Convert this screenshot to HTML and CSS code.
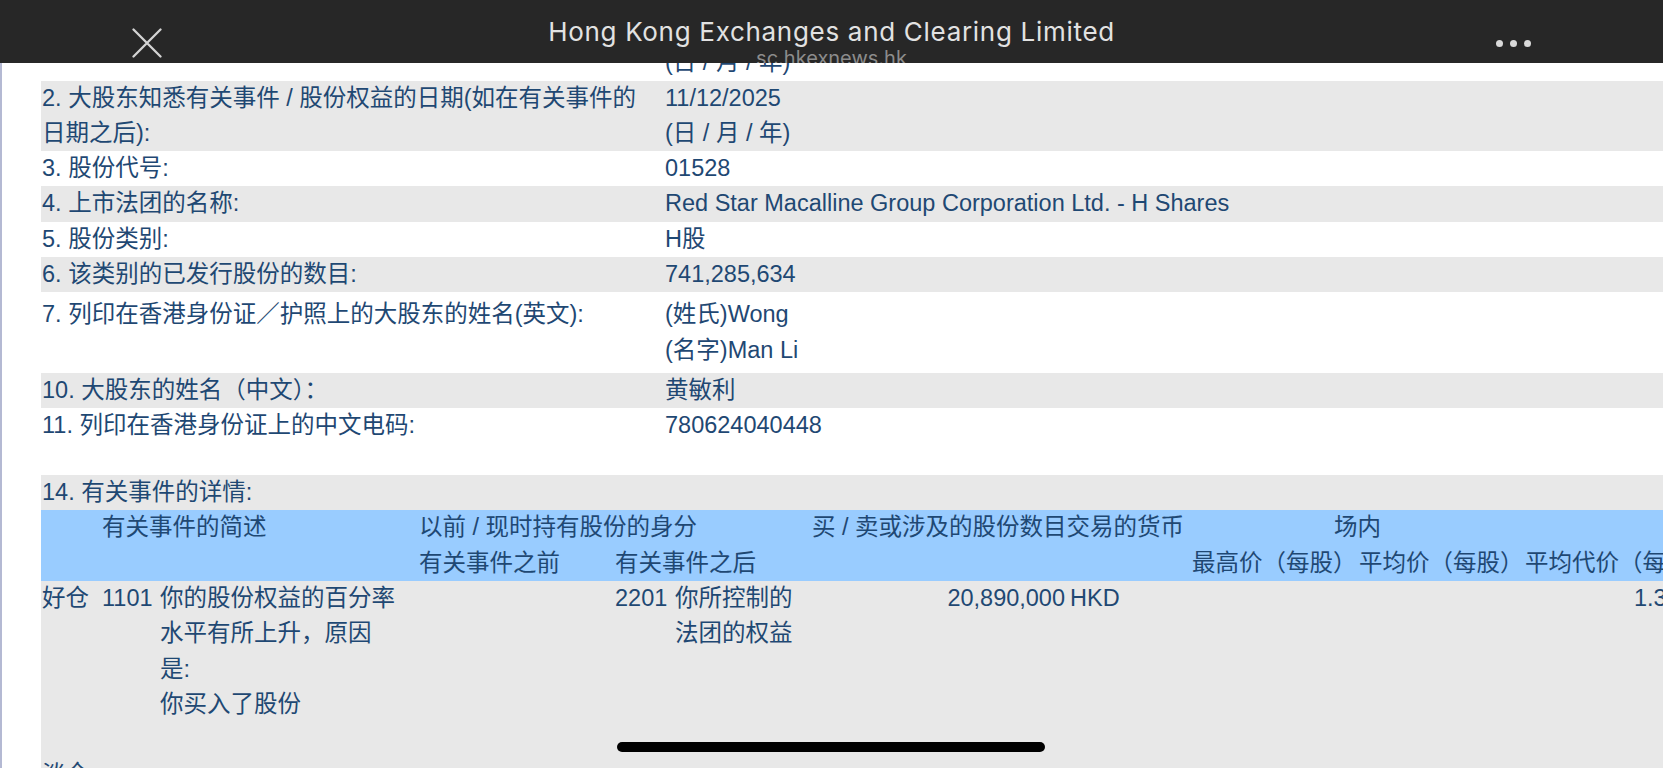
FILE: index.html
```html
<!DOCTYPE html>
<html lang="zh-CN">
<head>
<meta charset="utf-8">
<title>Hong Kong Exchanges and Clearing Limited</title>
<link rel="stylesheet" href="styles.css">
</head>
<body>
<div class="topbar">
  <div class="side side-left">
    <svg class="close" width="30" height="30" viewBox="0 0 30 30"><path d="M1.5 1.5 L28.5 28.5 M28.5 1.5 L1.5 28.5" /></svg>
  </div>
  <div class="title-block">
    <div class="title">Hong Kong Exchanges and Clearing Limited</div>
    <div class="subtitle">sc.hkexnews.hk</div>
  </div>
  <div class="side side-right">
    <span class="dot"></span><span class="dot"></span><span class="dot"></span>
  </div>
</div>

<div class="viewport">
  <div class="doc">
    <table class="form">
      <colgroup><col class="c-label"><col class="c-value"></colgroup>
      <tr class="w"><td>1. 有关事件的日期:</td><td>11/12/2025<br>(日 / 月 / 年)</td></tr>
      <tr class="g"><td>2. 大股东知悉有关事件 / 股份权益的日期(如在有关事件的<br>日期之后):</td><td>11/12/2025<br>(日 / 月 / 年)</td></tr>
      <tr class="w"><td>3. 股份代号:</td><td>01528</td></tr>
      <tr class="g"><td>4. 上市法团的名称:</td><td>Red Star Macalline Group Corporation Ltd. - H Shares</td></tr>
      <tr class="w"><td>5. 股份类别:</td><td>H股</td></tr>
      <tr class="g"><td>6. 该类别的已发行股份的数目:</td><td>741,285,634</td></tr>
      <tr class="w padded"><td>7. 列印在香港身份证／护照上的大股东的姓名(英文):</td><td>(姓氏)Wong<br>(名字)Man Li</td></tr>
      <tr class="g"><td>10. 大股东的姓名（中文）：</td><td>黄敏利</td></tr>
      <tr class="w"><td>11. 列印在香港身份证上的中文电码:</td><td>780624040448</td></tr>
      <tr class="w spacer"><td colspan="2"></td></tr>
      <tr class="g"><td colspan="2">14. 有关事件的详情:</td></tr>
      <tr class="g">
        <td colspan="2" class="nest">
          <table class="events">
            <colgroup>
              <col class="ca"><col class="cb"><col class="cc"><col class="cd"><col class="ce"><col class="cf"><col class="cg"><col class="ch"><col class="ci"><col class="cj"><col class="ck">
            </colgroup>
            <tr class="head h1">
              <td></td>
              <td colspan="2">有关事件的简述</td>
              <td colspan="3">以前 / 现时持有股份的身分</td>
              <td colspan="2">买 / 卖或涉及的股份数目交易的货币</td>
              <td colspan="2" class="center">场内</td>
              <td></td>
            </tr>
            <tr class="head">
              <td></td><td></td><td></td>
              <td>有关事件之前</td>
              <td colspan="2">有关事件之后</td>
              <td></td><td></td>
              <td>最高价（每股）</td>
              <td>平均价（每股）</td>
              <td>平均代价（每股）</td>
            </tr>
            <tr class="data">
              <td>好仓</td>
              <td>1101</td>
              <td>你的股份权益的百分率<br>水平有所上升，原因<br>是:<br>你买入了股份</td>
              <td></td>
              <td>2201</td>
              <td>你所控制的<br>法团的权益</td>
              <td class="right">20,890,000</td>
              <td>HKD</td>
              <td></td>
              <td></td>
              <td class="price">1.3400</td>
            </tr>
            <tr class="next">
              <td>淡仓</td><td></td><td></td><td></td><td></td><td></td><td></td><td></td><td></td><td></td><td></td>
            </tr>
          </table>
        </td>
      </tr>
    </table>
  </div>
</div>

<div class="home-indicator"></div>
</body>
</html>
```

FILE: styles.css
```css
html, body {
  margin: 0;
  padding: 0;
  width: 1663px;
  height: 768px;
  overflow: hidden;
  background: #ffffff;
}

body {
  position: relative;
  font-family: "Liberation Sans", "Noto Sans CJK SC", sans-serif;
}

/* ---------- top bar ---------- */
.topbar {
  height: 63px;
  background: #272727;
  display: flex;
  overflow: hidden;
}

.side {
  flex: 1 1 0;
  display: flex;
  align-items: flex-start;
}

.side-left {
  padding-left: 132px;
  padding-top: 28px;
}

.side-right {
  justify-content: flex-end;
  padding-right: 132px;
  padding-top: 40px;
  gap: 7px;
}

.close path {
  stroke: #d4d4d4;
  stroke-width: 2.3;
  stroke-linecap: round;
  fill: none;
}

.dot {
  width: 7px;
  height: 7px;
  border-radius: 50%;
  background: #d9d9d9;
}

.title-block {
  flex: 0 0 auto;
  padding-top: 17px;
  text-align: center;
  font-family: Inter, Roboto, "Liberation Sans", sans-serif;
}

.title {
  font-size: 26px;
  line-height: 30px;
  color: #e2e2e2;
  letter-spacing: 0.7px;
}

.subtitle {
  font-size: 20px;
  line-height: 23px;
  color: #8c8c8c;
}

/* ---------- page content ---------- */
.viewport {
  height: 705px;
  overflow: hidden;
  border-left: 2px solid #b4b9d3;
  padding-left: 39px;
}

.doc {
  margin-top: -53px;
}

table {
  border-collapse: collapse;
  border-spacing: 0;
  table-layout: fixed;
}

td {
  padding: 0 1px;
  vertical-align: top;
  white-space: nowrap;
  overflow: hidden;
  font-size: 23.5px;
  line-height: 35.3px;
  color: #1f4873;
}

.form {
  width: 1675px;
}

.c-label { width: 623px; }
.c-value { width: 1052px; }

.form tr.g { background: #e8e8e8; }
.form tr.w { background: #ffffff; }

.form tr.padded td {
  padding-top: 5px;
  padding-bottom: 5px;
}

.form tr.spacer td {
  height: 31px;
  padding: 0;
}

.form td.nest {
  padding: 0;
}

/* ---------- events table ---------- */
.events {
  width: 1675px;
}

.ca { width: 60px; }
.cb { width: 58px; }
.cc { width: 259px; }
.cd { width: 196px; }
.ce { width: 60px; }
.cf { width: 137px; }
.cg { width: 258px; }
.ch { width: 122px; }
.ci { width: 167px; }
.cj { width: 166px; }
.ck { width: 192px; }

.events tr.head {
  background: #99ccff;
}

.events tr.h1 td {
  height: 36px;
}

.events tr.data td {
  height: 176px;
}

.events td.center { text-align: center; }
.events td.right { text-align: right; padding-right: 4px; }
.events td.price { padding-left: 110px; }

/* ---------- overlay ---------- */
.home-indicator {
  position: absolute;
  left: 617px;
  top: 742px;
  width: 428px;
  height: 10px;
  border-radius: 5px;
  background: #000000;
}
```
